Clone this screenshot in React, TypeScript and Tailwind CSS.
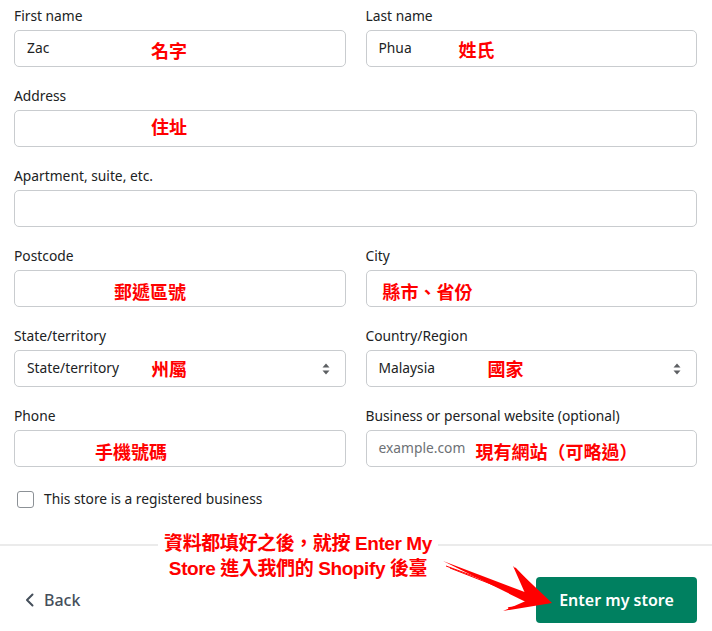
import React from "react";

const note = "absolute text-[18px] leading-[18px] font-bold text-[#ff0000] whitespace-nowrap [font-family:'Noto_Sans_CJK_TC','Noto_Sans',sans-serif]";

const Field = ({ label, value, placeholder, select, span, children }: any) => (
  <div className={span ? "col-span-2 flex flex-col gap-1" : "flex flex-col gap-1"}>
    <label className="text-[13.8px] leading-5 text-[#202223]">{label}</label>
    <div className="relative h-[37px] rounded-[5px] border border-[#c9cccf] bg-white flex items-center px-3">
      {value && <span className="text-[13.8px] text-[#202223]">{value}</span>}
      {placeholder && <span className="text-[13.8px] text-[#6d7175]">{placeholder}</span>}
      {select && (
        <svg className="ml-auto mr-[2px]" width="10" height="14" viewBox="0 0 10 14">
          <path d="M5 1.5 L8.5 5.5 H1.5 Z M5 12.5 L8.5 8.5 H1.5 Z" fill="#5c5f62" />
        </svg>
      )}
      {children}
    </div>
  </div>
);

export default function App() {
  return (
    <div className="relative w-[712px] h-[631px] overflow-hidden bg-white [font-family:'Noto_Sans',sans-serif]">
      <div className="grid grid-cols-2 gap-x-5 gap-y-[19px] px-[14px] pr-[15px] pt-[6px]">
        <Field label="First name" value="Zac">
          <span className={note + " left-[136px] top-[10px]"}>名字</span>
        </Field>
        <Field label="Last name" value="Phua">
          <span className={note + " left-[92px] top-[9px]"}>姓氏</span>
        </Field>
        <Field label="Address" span>
          <span className={note + " left-[136px] top-[6px]"}>住址</span>
        </Field>
        <Field label="Apartment, suite, etc." span />
        <Field label="Postcode">
          <span className={note + " left-[99px] top-[11px]"}>郵遞區號</span>
        </Field>
        <Field label="City">
          <span className={note + " left-[16px] top-[11px]"}>縣市、省份</span>
        </Field>
        <Field label="State/territory" value="State/territory" select>
          <span className={note + " left-[136px] top-[8px]"}>州屬</span>
        </Field>
        <Field label="Country/Region" value="Malaysia" select>
          <span className={note + " left-[121px] top-[8px]"}>國家</span>
        </Field>
        <Field label="Phone">
          <span className={note + " left-[80px] top-[11px]"}>手機號碼</span>
        </Field>
        <Field label="Business or personal website (optional)" placeholder="example.com">
          <span className={note + " left-[109px] top-[11px]"}>現有網站（可略過）</span>
        </Field>
      </div>

      <div className="flex items-center gap-[10px] px-[17px] mt-[22px]">
        <span className="w-[17px] h-[17px] rounded-[3px] border-[1.5px] border-[#8c9196] bg-white" />
        <span className="text-[13.8px] leading-5 text-[#202223]">This store is a registered business</span>
      </div>

      <div className="mt-[35px] h-[2px] bg-[#ebebeb]" />

      <div className="flex items-center justify-between pl-[24px] pr-[15px] pt-[31px]">
        <div className="flex items-center gap-[8px] text-[#454f5b]">
          <svg width="12" height="16" viewBox="0 0 12 16">
            <path d="M8.5 2.5 L3 8 L8.5 13.5" stroke="#454f5b" strokeWidth="2" fill="none" strokeLinecap="round" strokeLinejoin="round" />
          </svg>
          <span className="text-[16px] font-medium">Back</span>
        </div>
        <button className="h-[46px] w-[161px] rounded-[4px] bg-[#008060] text-white text-[16px] font-semibold">
          Enter my store
        </button>
      </div>

      <div className="absolute left-[158px] top-[531px] w-[280px] bg-white text-center text-[19px] leading-[25px] font-bold text-[#ff0000] [font-family:'Liberation_Sans','Noto_Sans_CJK_TC',sans-serif] tracking-[-0.4px]">
        <div>資料都填好之後，就按 Enter My</div>
        <div>Store 進入我們的 Shopify 後臺</div>
      </div>

      <svg className="absolute left-0 top-0 pointer-events-none" width="712" height="631" viewBox="0 0 712 631">
        <path d="M443 561 L538 597 L530 604 Z" fill="#ff0000" />
        <path d="M446 566 L536 599" stroke="#ff0000" strokeWidth="1" fill="none" />
        <path d="M450 568 L534 601" stroke="#ff0000" strokeWidth="1" fill="none" />
        <path d="M513 566 L552 603 L503 611 L528 600 Z" fill="#ff0000" />
        <path d="M515 568 L548 603 M508 608 L548 602" stroke="#ff0000" strokeWidth="1.5" fill="none" />
      </svg>
    </div>
  );
}
